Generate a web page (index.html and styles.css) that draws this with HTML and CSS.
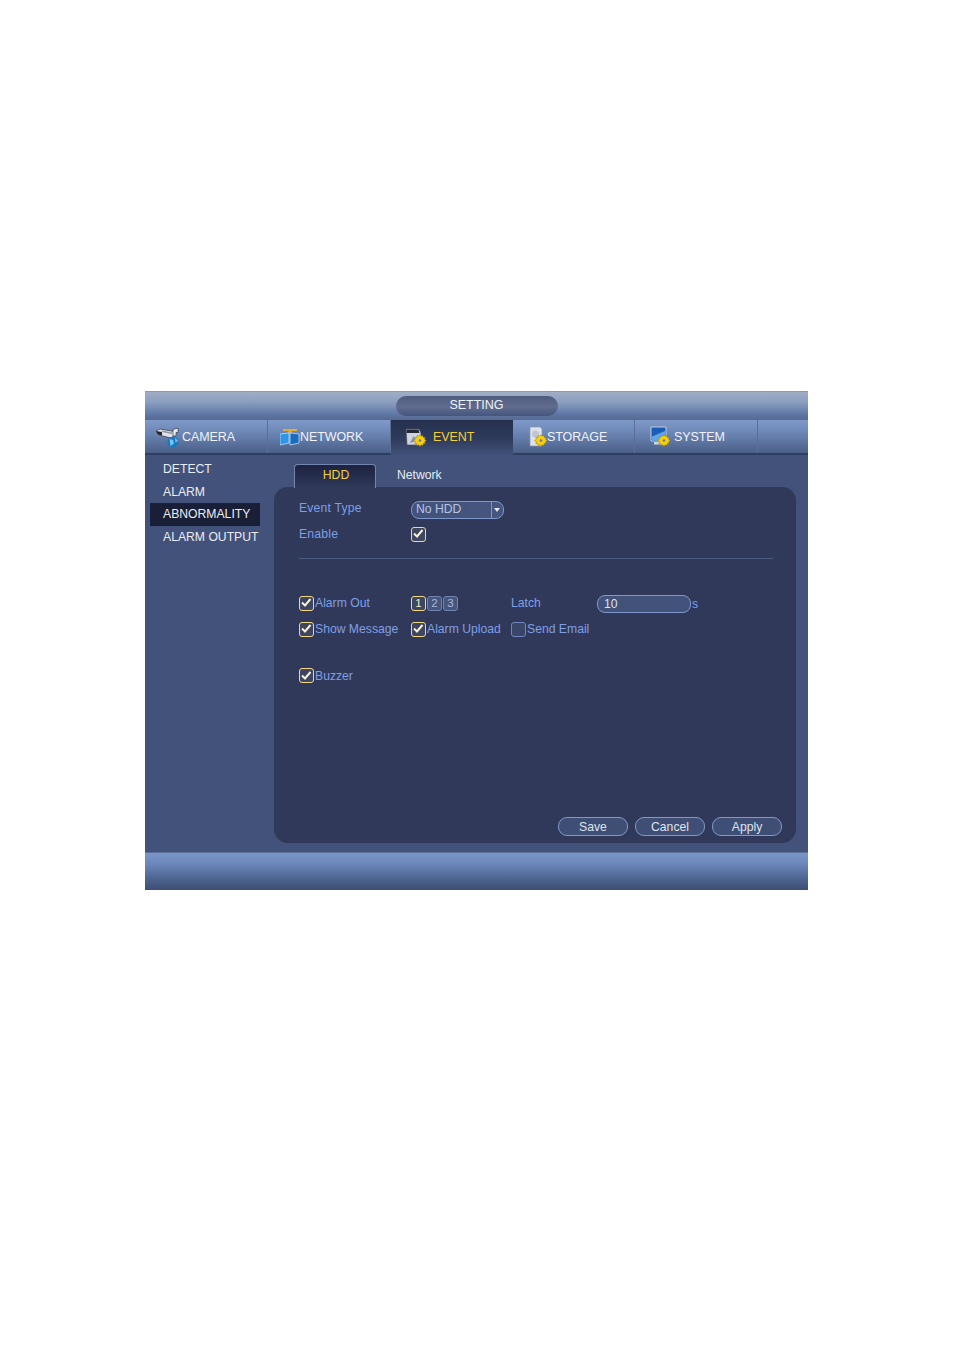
FILE: index.html
```html
<!DOCTYPE html>
<html lang="en">
<head>
  <meta charset="UTF-8" />
  <title>Setting</title>
  <link rel="stylesheet" href="styles.css">
</head>
<body>
  <svg class="defs" width="0" height="0">
    <defs>
      <g id="gear">
        <path d="M5 0l1.100 1.700 1.900-.7.200 2 2-.1-.6 1.900L11.500 6l-1.900 1.200.6 1.900-2-.1-.2 2-1.900-.7L5 12l-1.100-1.700-1.900.7-.2-2-2 .1.600-1.900L-1.500 6l1.900-1.200-.6-1.900 2 .1.200-2 1.900.7z" fill="#f5cf12" stroke="#97760a" stroke-width=".5"/>
        <circle cx="5" cy="6" r="1.300" fill="#6d7a98"/>
      </g>
      <path id="tick" d="M3 7.500l3 3 5.500-6.500" fill="none" stroke="#f6f0d4" stroke-width="2"/>
    </defs>
  </svg>

  <div class="window">
    <div class="titlebar"><div class="title">SETTING</div></div>

    <div class="tabs">
      <div class="tab tab-camera">
        <svg class="ico" width="24" height="22" viewBox="0 0 24 22">
          <path d="M0 5l4-2 14 2.500V10l-3 2-12-3z" fill="#dfe2e8" stroke="#343947" stroke-width=".7"/>
          <path d="M0 5l6 1v3.500L2 8.500z" fill="#23252f"/>
          <path d="M6 4.500l10 2v1.500L6 6z" fill="#8f95a6"/>
          <path d="M17 3.500l5-1.500v4.500h-2V10h-3z" fill="#eceef2" stroke="#343947" stroke-width=".7"/>
          <circle cx="17" cy="16" r="5.500" fill="#1a78bf"/>
          <path d="M13.500 13l3.500 1 1 3.500-3.500 2.500zM19 11.500l3 3.500-2.500 1.500z" fill="#74c5ee"/>
        </svg>
        <span>CAMERA</span>
      </div>
      <div class="tab tab-network">
        <svg class="ico" width="20" height="18" viewBox="0 0 20 18">
          <path d="M3 1h14v2h-5.500v2h-3V3H3z" fill="#e6ad2b"/>
          <path d="M0 6l9-1v10l-9 2z" fill="#2f95e6" stroke="#d6e7f6" stroke-width=".7"/>
          <path d="M10 5l9 1v9l-9 2z" fill="#1b6cbd" stroke="#d6e7f6" stroke-width=".7"/>
        </svg>
        <span>NETWORK</span>
      </div>
      <div class="tab tab-event active">
        <svg class="ico" width="21" height="19" viewBox="0 0 21 19">
          <path d="M1 1h13l2 4v12H2z" fill="#cfd4dd" stroke="#454a5e" stroke-width=".7"/>
          <path d="M1.500 1.500h12l1 3.500h-13z" fill="#262938"/>
          <path d="M5 15l3.500-7 3 5z" fill="#7d92c4"/>
          <use href="#gear" x="10" y="6.500"/>
        </svg>
        <span>EVENT</span>
      </div>
      <div class="tab tab-storage">
        <svg class="ico" width="18" height="21" viewBox="0 0 18 21">
          <path d="M1 1h10l2 2v17H1z" fill="#dde1e9" stroke="#8f97ab" stroke-width=".7"/>
          <circle cx="6.500" cy="8" r="3.500" fill="#bfc5d2"/>
          <use href="#gear" x="7" y="8.500"/>
        </svg>
        <span>STORAGE</span>
      </div>
      <div class="tab tab-system">
        <svg class="ico" width="20" height="21" viewBox="0 0 20 21">
          <path d="M1 1h15v14H1z" fill="#1a5cb8" stroke="#cdd5e4" stroke-width=".9"/>
          <path d="M2 10.500l13-5.500v9.500H2z" fill="#5ea6ec"/>
          <path d="M4 16h9v2.500H4z" fill="#cdd5e4"/>
          <use href="#gear" x="9" y="8.500"/>
        </svg>
        <span>SYSTEM</span>
      </div>
      <div class="tab-rest"></div>
    </div>

    <div class="body">
      <ul class="sidebar">
        <li>DETECT</li>
        <li>ALARM</li>
        <li class="selected">ABNORMALITY</li>
        <li>ALARM OUTPUT</li>
      </ul>

      <div class="content">
        <div class="subtabs">
          <div class="subtab current">HDD</div>
          <div class="subtab">Network</div>
        </div>

        <div class="panel">
          <div class="form-top">
            <div class="row row-type">
              <label class="lbl-wide">Event Type</label>
              <div class="select"><span class="select-val">No HDD</span><span class="select-arrow"></span></div>
            </div>
            <div class="row">
              <label class="lbl-wide">Enable</label>
              <span class="check on"><svg width="15" height="15" viewBox="0 0 15 15"><use href="#tick"/></svg></span>
            </div>
          </div>

          <div class="divider"></div>

          <div class="form-grid">
            <div class="opt"><span class="check on"><svg width="15" height="15" viewBox="0 0 15 15"><use href="#tick"/></svg></span>Alarm Out</div>
            <div class="nums">
              <span class="num on">1</span><span class="num">2</span><span class="num">3</span>
            </div>
            <div class="opt">Latch</div>
            <div class="latch"><span class="input">10</span><span class="unit">s</span></div>

            <div class="opt"><span class="check on"><svg width="15" height="15" viewBox="0 0 15 15"><use href="#tick"/></svg></span>Show Message</div>
            <div class="opt"><span class="check on"><svg width="15" height="15" viewBox="0 0 15 15"><use href="#tick"/></svg></span>Alarm Upload</div>
            <div class="opt span-2"><span class="check"></span>Send Email</div>
          </div>

          <div class="opt buzzer"><span class="check on"><svg width="15" height="15" viewBox="0 0 15 15"><use href="#tick"/></svg></span>Buzzer</div>

          <div class="actions">
            <button>Save</button>
            <button>Cancel</button>
            <button>Apply</button>
          </div>
        </div>
      </div>
    </div>

    <div class="footer"></div>
  </div>
</body>
</html>
```

FILE: styles.css
```css
* { box-sizing: border-box; }
body {
  margin: 0; background: #fff; padding: 391px 0 0 145px;
  font-family: "Liberation Sans", Arial, sans-serif; font-size: 12.2px;
}
.defs { position: absolute; }
.window {
  width: 663px; height: 499px; background: #42527a;
  display: flex; flex-direction: column;
}

/* title bar */
.titlebar {
  height: 29px; padding-top: 4px; display: flex; justify-content: center;
  background: linear-gradient(#9fadc6, #8c9fc0 35%, #5f77a6 80%, #56698f);
  border-top: 1px solid #8d98b0;
}
.title {
  width: 162px; height: 20px; border-radius: 10px; color: #eef1f6;
  text-align: center; line-height: 18px; font-size: 12.5px;
  background: linear-gradient(#4f5c7e, #5f6c8e 55%, #46557c);
}

/* main tabs */
.tabs {
  height: 35px; display: flex; border-bottom: 2px solid #303e5f;
  background: linear-gradient(#7f9aca, #6b85b4 40%, #4b5f88);
}
.tab {
  width: 122px; display: flex; align-items: center; color: #f0f3f8;
  border-right: 1px solid #5a6e98; padding-left: 10px;
  font-size: 12.5px; letter-spacing: -.1px;
}
.ico { flex: none; }
.tab-camera { width: 123px; padding-left: 11px; }
.tab-camera span { margin-left: 2px; }
.tab-network { width: 123px; padding-left: 12px; }
.tab-event { padding-left: 14px; }
.tab-event span { margin-left: 7px; position: relative; top: -1px; }
.tab-storage { padding-left: 16px; }
.tab-system { width: 123px; padding-left: 15px; }
.tab-system span { margin-left: 4px; }
.tab.active {
  color: #f5cf35; border-right: none; margin-bottom: -2px;
  background: linear-gradient(#25304e, #2f3b5c 55%, #42527a);
}
.tab-rest { flex: 1; }

/* left menu */
.body { flex: 1; display: flex; }
.sidebar {
  list-style: none; margin: 0; padding: 3px 0 0 5px; width: 129px; color: #eaedf4;
}
.sidebar li {
  width: 110px; height: 22.6px; line-height: 22.6px;
  padding-left: 13px; white-space: nowrap;
}
.sidebar .selected { background: #181f36; }

/* content */
.content { width: 522px; padding-top: 9px; }
.subtabs { display: flex; height: 24px; padding-left: 20px; }
.subtab { color: #e8ecf4; line-height: 22px; padding-left: 21px; }
.subtab.current {
  width: 82px; padding: 0 0 0 2px; text-align: center; color: #f5cf35;
  border: 1px solid #7486ab; border-bottom: none; line-height: 20px;
  border-radius: 4px 4px 0 0; position: relative; z-index: 1;
  background: linear-gradient(#1b2340, #303959);
}
.panel {
  height: 356px; margin-top: -1px; background: #303959; border-radius: 14px;
  padding: 9px 23px 7px 25px; display: flex; flex-direction: column; color: #7f9fe6;
}
.row { height: 25.500px; display: flex; align-items: center; }
.lbl-wide { width: 112px; letter-spacing: .2px; }
.row-type .lbl-wide { padding-bottom: 2px; }
.select {
  width: 93px; height: 18px; display: flex; margin-top: 2px;
  border: 1px solid #7f97c9; border-radius: 8px; color: #b6c4e2;
  background: linear-gradient(90deg, #42527a, #46567f);
}
.select-val { width: 80px; line-height: 15px; padding-left: 4px; border-right: 1px solid #7f97c9; }
.select-arrow {
  width: 0; height: 0; margin: 6px 0 0 2px;
  border: 3.500px solid transparent; border-top: 4px solid #e4e8f0; border-bottom: 0;
}
.check {
  width: 15px; height: 15px; border: 1.500px solid #6f86bb; border-radius: 3px;
  display: inline-block; flex: none; background: #3a4669; margin-right: 1px;
}
.check svg { display: block; margin: -1.500px; }
.check.on { border-color: #f0d884; background: #3d4560; }
.divider { height: 1px; background: #4a5a80; margin: 11px 0 0; }

.form-grid {
  margin-top: 31px; display: grid; align-items: center;
  grid-template-columns: 112px 100px 86px 110px; grid-auto-rows: 26px;
}
.opt { display: flex; align-items: center; white-space: nowrap; }
.span-2 { grid-column: span 2; }
.nums { display: flex; gap: 1px; }
.num {
  width: 15px; height: 15px; border: 1.500px solid #7084b2; border-radius: 3px;
  background: #46567d; color: #a9b9dc; font-size: 11.500px; line-height: 12px; text-align: center;
}
.num.on { border-color: #f0d884; background: #3d4560; color: #f4ecc8; }
.latch { display: flex; align-items: center; margin-top: 2px; }
.input {
  width: 94px; height: 18px; border: 1px solid #8098cc; border-radius: 8px;
  background: #42527a; color: #dde3f0; line-height: 17px; padding-left: 6px; flex: none;
}
.unit { margin-left: 1px; }
.buzzer { margin-top: 26px; }

.actions { margin-top: auto; display: flex; gap: 7px; justify-content: flex-end; margin-right: -9px; }
button {
  width: 70px; height: 19px; padding: 0; border-radius: 9px; color: #dfe4ef;
  border: 1.500px solid #8099cc; background: #3f4e75;
  font: inherit; line-height: 16px;
}

.footer {
  height: 38px;
  background: linear-gradient(#7a95c8, #6b86ba 30%, #4e648f 70%, #3d4d75);
  border-top: 1px solid #5a6e98;
}
```
